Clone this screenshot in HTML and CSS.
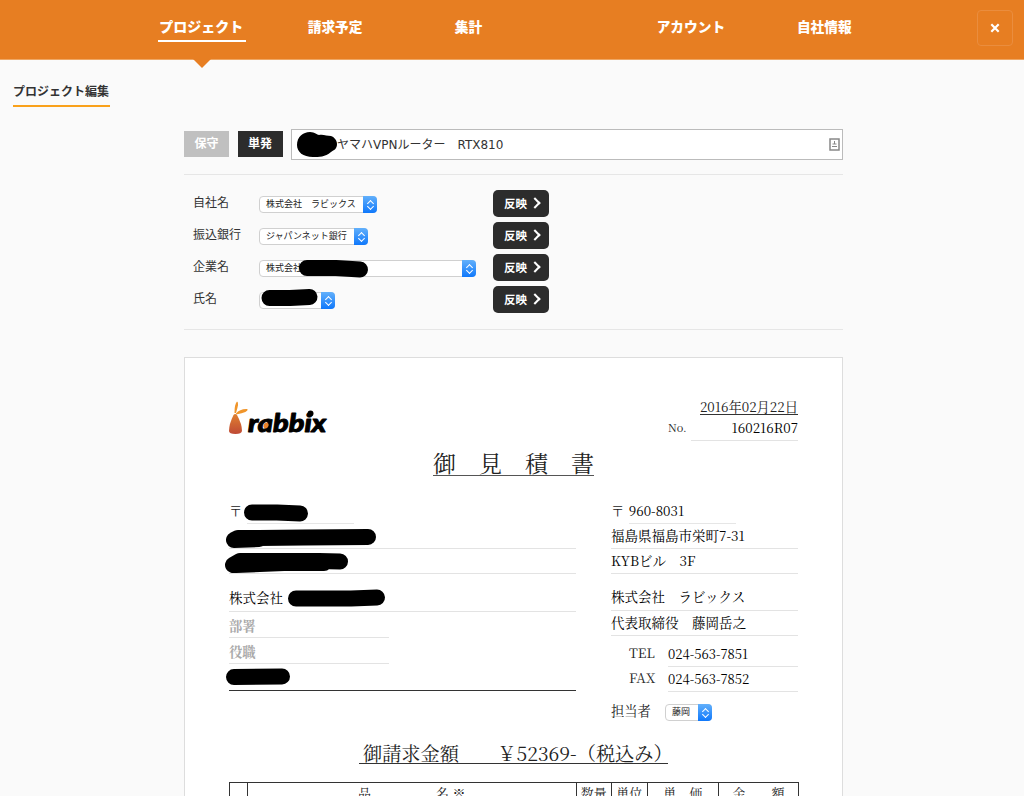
FILE: index.html
```html
<!DOCTYPE html>
<html lang="ja">
  <head>
    <meta charset="UTF-8" />
    <title>プロジェクト編集</title>
    <link rel="stylesheet" href="styles.css">
  </head>
  <body>
    <header class="header">
      <nav class="nav">
        <a class="nav-item active"><span>プロジェクト</span></a>
        <a class="nav-item"><span>請求予定</span></a>
        <a class="nav-item"><span>集計</span></a>
      </nav>
      <nav class="nav nav-right">
        <a class="nav-item"><span>アカウント</span></a>
        <a class="nav-item"><span>自社情報</span></a>
      </nav>
      <button class="close-btn">
        <svg width="10" height="10" viewBox="0 0 10 10"><path d="M1.3 1.3 8.7 8.7M8.7 1.3 1.3 8.7" stroke="#fff" stroke-width="2.2" /></svg>
      </button>
    </header>

    <h1 class="page-title">プロジェクト編集</h1>

    <main class="container">
      <div class="project-name">
        <button class="tab tab-off">保守</button>
        <button class="tab">単発</button>
        <div class="name-input">
          <span>ヤマハVPNルーター　RTX810</span>
          <svg class="card-icon" width="11" height="13" viewBox="0 0 11 13">
            <rect x="1" y="1" width="9" height="11" fill="#fff" stroke="#888" stroke-width="1.5" />
            <path d="M5.5 3v3M3.5 6h4M3 8.5h5" stroke="#888" />
          </svg>
          <svg class="mask" width="48" height="30" viewBox="0 0 48 30"><path d="M5 15C5 7 11 2 18 2c5 0 7 3 9 3 4-1 8 1 12 1 3 1 6 4 6 8 0 5-3 6-6 8-6 5-12 5-18 5C11 27 5 22 5 15Z" /></svg>
        </div>
      </div>

      <section class="apply-list">
        <div class="apply-row">
          <label>自社名</label>
          <div class="select w-company">株式会社　ラビックス<i></i></div>
          <button class="apply-btn">反映<i></i></button>
        </div>
        <div class="apply-row">
          <label>振込銀行</label>
          <div class="select w-bank">ジャパンネット銀行<i></i></div>
          <button class="apply-btn">反映<i></i></button>
        </div>
        <div class="apply-row">
          <label>企業名</label>
          <div class="select w-client">株式会社<i></i>
            <svg class="mask mask-client" width="72" height="20" viewBox="0 0 72 20"><path class="line" d="M9 9 38 9 62 10.500" /></svg>
          </div>
          <button class="apply-btn">反映<i></i></button>
        </div>
        <div class="apply-row">
          <label>氏名</label>
          <div class="select w-person"><i></i>
            <svg class="mask mask-person" width="60" height="20" viewBox="0 0 60 20"><path class="line" d="M9.500 11 30 11 49.500 10" /></svg>
          </div>
          <button class="apply-btn">反映<i></i></button>
        </div>
      </section>

      <article class="sheet">
        <div class="sheet-head">
          <svg class="logo" width="110" height="36" viewBox="0 0 110 36">
            <defs>
              <linearGradient id="carrot" x1="0" y1="0" x2="0" y2="1">
                <stop offset="0" stop-color="#e08030" />
                <stop offset="1" stop-color="#bf4a35" />
              </linearGradient>
            </defs>
            <path d="M5.500 12Q5.500 3 8 .5 10.500 1 7 12ZM7 12.500Q11 7.500 18.500 8 20 11 7 13.500Z" fill="#f0952a" />
            <path d="M4.500 14Q6 12 8 14 13 23 13 30 12.500 33 6.500 33 0 33 0 30 0 23 4.500 14Z" fill="url(#carrot)" />
            <text class="logo-text" x="19" y="30.500" textLength="78" lengthAdjust="spacingAndGlyphs">rabbix</text>
            <ellipse cx="37" cy="24.500" rx="2.500" ry="3" fill="#e8812a" transform="rotate(20 37 24.500)" />
            <circle cx="81.500" cy="12.500" r="3" />
          </svg>
          <div class="issue">
            <div class="issue-date"><span>2016年02月22日</span></div>
            <div class="issue-no">No.<span>160216R07</span></div>
          </div>
        </div>

        <h2 class="sheet-title"><span>御　見　積　書</span></h2>

        <div class="parties">
          <div class="client">
            <div class="zip">〒<span></span>
              <svg class="mask mask-zip" width="68" height="20" viewBox="0 0 68 20"><path class="line" d="M10 9.500 35 9.500 58 10.500" /></svg>
            </div>
            <div class="field">
              <svg class="mask mask-address" width="156" height="22" viewBox="0 0 156 22"><path class="line" d="M10 12 14 10 35 10 80 9.500 144 9M10 12 35 11" /></svg>
            </div>
            <div class="field">
              <svg class="mask mask-building" width="128" height="24" viewBox="0 0 128 24"><path class="line" d="M9 14 16 10 60 10 95 10 116 10.500M12 14 60 12 100 12" /></svg>
            </div>
            <div class="field client-name">株式会社
              <svg class="mask mask-name" width="102" height="20" viewBox="0 0 102 20"><path class="line" d="M10 10.500 65 10.500 91 9.500" /></svg>
            </div>
            <div class="field short">部署</div>
            <div class="field short">役職</div>
            <div class="field client-person">
              <svg class="mask mask-sign" width="70" height="20" viewBox="0 0 70 20"><path class="line" d="M10 10 58 9.500" /></svg>
            </div>
          </div>

          <div class="company">
            <div class="zip">〒<span>960-8031</span></div>
            <div class="field">福島県福島市栄町7-31</div>
            <div class="field">KYBビル　3F</div>
            <div class="field company-name">株式会社　ラビックス</div>
            <div class="field">代表取締役　藤岡岳之</div>
            <div class="phone first">TEL<span>024-563-7851</span></div>
            <div class="phone">FAX<span>024-563-7852</span></div>
            <div class="staff"><label>担当者</label><div class="select w-staff">藤岡<i></i></div></div>
          </div>
        </div>

        <div class="total"><span>御請求金額　　￥52369-（税込み）</span></div>

        <table class="items">
          <tr>
            <th class="col-no"></th>
            <th class="col-item">品　　　　　名 ※</th>
            <th class="col-qty">数量</th>
            <th class="col-unit">単位</th>
            <th class="col-price">単　価</th>
            <th class="col-sum">金　　額</th>
          </tr>
        </table>
      </article>
    </main>
  </body>
</html>
```
FILE: styles.css
```css
* {
  box-sizing: border-box;
}
body {
  margin: 0;
  height: 796px;
  overflow: hidden;
  background-color: #fafafa;
  color: #333;
  font-family: "Noto Sans CJK JP", sans-serif;
  font-size: 12px;
}
button {
  border: none;
  padding: 0;
  font-family: inherit;
  font-weight: bold;
  color: white;
}
.header {
  display: flex;
  height: 60px;
  padding-left: 135px;
  background-color: #e77e22;
  border-bottom: 1px solid #eea765;
}
.nav {
  display: flex;
}
.nav-right {
  margin-left: 89px;
}
.nav-item {
  position: relative;
  width: 133.4px;
  padding-top: 13px;
  text-align: center;
  color: white;
  font-size: 13.7px;
  font-weight: 900;
  line-height: 27px;
}
.nav-item span {
  display: inline-block;
}
.nav-item.active span {
  width: 88px;
  padding-right: 1px;
  border-bottom: 2px solid white;
  font-size: 14px;
}
.nav-item.active::after {
  content: "";
  position: absolute;
  left: 58px;
  top: 59px;
  border: 9px solid transparent;
  border-top-color: #e77e22;
  border-bottom: none;
}
.close-btn {
  display: flex;
  align-items: center;
  justify-content: center;
  width: 36px;
  height: 36px;
  margin: 10px 11px 0 auto;
  background: none;
  border: 1px solid #ea8d3e;
  border-radius: 4px;
}
.page-title {
  width: 97px;
  height: 47px;
  margin: 0 0 0 13px;
  padding-top: 20px;
  border-bottom: 2px solid #f9a11b;
  font-size: 12px;
  line-height: 21px;
  white-space: nowrap;
}
.container {
  width: 659px;
  margin: 22px 0 0 184px;
}
.project-name {
  display: flex;
  align-items: center;
  height: 46px;
  padding-bottom: 15px;
  border-bottom: 1px solid #e6e6e6;
}
.tab {
  width: 45px;
  height: 26px;
  margin-right: 8.5px;
  padding-bottom: 3px;
  background-color: #2c2c2c;
  font-size: 12px;
}
.tab-off {
  background-color: #c0c0c0;
}
.name-input {
  position: relative;
  display: flex;
  align-items: center;
  justify-content: space-between;
  width: 552px;
  height: 31px;
  padding: 0 2px 0 45px;
  background-color: white;
  border: 1px solid #bbb;
  font-family: "DejaVu Sans", "Noto Sans CJK JP", sans-serif;
}
.name-input span {
  padding-bottom: 1px;
}
.mask {
  position: absolute;
  left: 0;
  top: 0;
}
.mask .line {
  fill: none;
  stroke: black;
  stroke-width: 16;
  stroke-linecap: round;
  stroke-linejoin: round;
}
.apply-list {
  height: 155px;
  padding-top: 13px;
  border-bottom: 1px solid #e6e6e6;
}
.apply-row {
  display: grid;
  grid-template-columns: 66px 234px 56px;
  align-items: center;
  height: 32px;
  padding-left: 9px;
}
.apply-row label {
  padding-bottom: 5px;
}
.select {
  position: relative;
  height: 17px;
  padding-left: 6px;
  background-color: white;
  border: 1px solid #d0d0d0;
  border-radius: 4px;
  color: #222;
  font-family: "Noto Sans CJK JP", sans-serif;
  font-size: 9px;
  line-height: 14px;
  white-space: nowrap;
}
/* blue stepper at the right end */
.select i {
  position: absolute;
  right: -1px;
  top: -1px;
  width: 14px;
  height: 17px;
  background: linear-gradient(#62b0fb, #0f78fb);
  border-radius: 0 4px 4px 0;
}
.select i::before,
.select i::after {
  content: "";
  position: absolute;
  left: 5px;
  top: 5px;
  width: 4px;
  height: 4px;
  border: solid white;
  border-width: 1px 0 0 1px;
  transform: rotate(45deg);
}
.select i::after {
  top: 8px;
  transform: rotate(225deg);
}
.w-company {
  width: 118px;
}
.w-bank {
  width: 109px;
}
.w-client {
  width: 217px;
}
.w-person {
  width: 76px;
}
.w-staff {
  width: 47px;
}
.mask-client {
  left: 38px;
  top: -2px;
}
.mask-person {
  left: 0;
  top: -6px;
}
.apply-btn {
  display: flex;
  align-items: center;
  width: 56px;
  height: 27px;
  margin-bottom: 1px;
  padding: 0 0 1px 11px;
  background-color: #2c2c2c;
  border-radius: 5px;
  font-size: 11.5px;
}
.apply-btn i {
  width: 8px;
  height: 8px;
  margin-left: 4px;
  border: solid white;
  border-width: 2px 2px 0 0;
  transform: rotate(45deg);
}
.sheet {
  height: 439px;
  margin-top: 27px;
  padding: 40px 44px 0;
  background-color: white;
  border: 1px solid #ddd;
  border-bottom: none;
  color: #222;
  font-family: "Noto Serif CJK JP", "Liberation Serif", "Noto Sans CJK JP", serif;
  font-size: 13.3px;
}
.sheet-head {
  display: flex;
  justify-content: space-between;
  height: 44px;
}
.logo {
  margin-top: 3px;
}
.logo-text {
  font-family: Lato, sans-serif;
  font-size: 24px;
  font-weight: 900;
  font-style: italic;
  stroke: black;
  stroke-width: 0.9px;
  stroke-linejoin: round;
}
.issue {
  width: 130px;
}
.issue-date {
  height: 20px;
  text-align: right;
  line-height: 18px;
}
.issue-date span {
  display: inline-block;
  height: 17px;
  border-bottom: 1px solid #333;
}
.issue-no {
  display: flex;
  justify-content: space-between;
  height: 23px;
  font-size: 11px;
  line-height: 19px;
}
.issue-no span {
  width: 107px;
  border-bottom: 1px solid #e3e3e3;
  text-align: right;
  font-size: 13.3px;
  color: black;
}
.sheet-title {
  height: 58px;
  margin: 0;
  padding-top: 7px;
  text-align: center;
  font-size: 23px;
  font-weight: normal;
  line-height: 27px;
}
.sheet-title span {
  display: inline-block;
  height: 27px;
  border-bottom: 1px solid #555;
}
.parties {
  display: flex;
  justify-content: space-between;
  height: 237px;
}
.client {
  width: 347px;
}
.company {
  width: 187px;
}
.zip {
  position: relative;
  display: flex;
  height: 24px;
  line-height: 22px;
}
.zip span {
  width: 107px;
  margin-left: 4.5px;
  border-bottom: 1px solid #e6e6e6;
  color: black;
}
.field {
  position: relative;
  height: 25px;
  border-bottom: 1px solid #e3e3e3;
  color: black;
  font-size: 13.5px;
  line-height: 23px;
  white-space: nowrap;
}
.client-name {
  height: 38px;
  padding-top: 12px;
}
.short {
  width: 160px;
  height: 26px;
  color: #aaa;
  font-size: 13.3px;
  font-weight: bold;
  line-height: 28px;
}
.client-person {
  height: 27px;
  border-bottom-color: #333;
}
.mask-zip {
  left: 13px;
  top: 3px;
}
.mask-address {
  left: -5px;
  top: 4px;
}
.mask-building {
  left: -5px;
  top: 2px;
}
.mask-name {
  left: 57px;
  top: 14px;
}
.mask-sign {
  left: -5px;
  top: 3px;
}
.company-name {
  height: 37px;
  padding-top: 11px;
}
.phone {
  display: flex;
  height: 25px;
  padding-left: 18px;
  line-height: 21px;
}
.phone.first {
  height: 31px;
  padding-top: 6px;
}
.phone span {
  width: 130px;
  margin-left: auto;
  border-bottom: 1px solid #e3e3e3;
  color: black;
  font-size: 13px;
  line-height: 23px;
}
.staff {
  display: flex;
  align-items: center;
  gap: 14px;
  height: 41px;
  line-height: 16px;
}
.staff label {
  padding-bottom: 3px;
}
.total {
  height: 45px;
  padding-top: 1px;
  text-align: center;
  font-size: 19.2px;
  line-height: 30px;
}
.total span {
  display: inline-block;
  width: 309px;
  height: 26px;
  padding-left: 4px;
  border-bottom: 1px solid #333;
  text-align: left;
  white-space: nowrap;
}
.items {
  width: 570px;
  table-layout: fixed;
  border-collapse: collapse;
}
.items th {
  height: 13px;
  padding: 0;
  border: 1px solid #333;
  border-bottom: none;
  font-size: 13px;
  font-weight: normal;
  line-height: 19px;
  vertical-align: top;
  white-space: nowrap;
}
.col-no {
  width: 18px;
}
.col-qty,
.col-unit {
  width: 35.5px;
}
.col-price {
  width: 71.5px;
}
.col-sum {
  width: 80px;
}
```
